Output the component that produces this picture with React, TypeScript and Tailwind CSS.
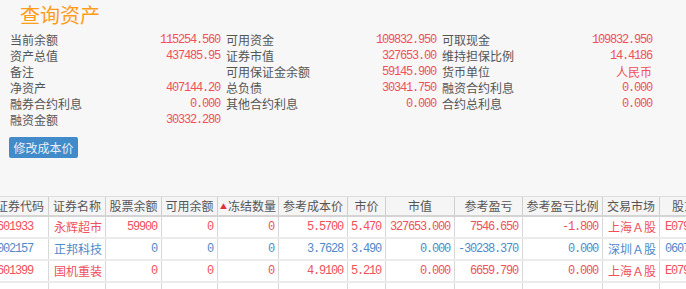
import React from "react";

// Asset query panel: summary grid + holdings table (scrolled a little to the right).

const cjk = "font-['Noto_Sans_CJK_SC',sans-serif]";
const mono = "font-['Liberation_Mono','Noto_Sans_CJK_SC',monospace] text-[12px] tracking-[-1.2px]";

type Pair = [string, string];

const summary: Pair[][] = [
  [
    ["当前余额", "115254.560"],
    ["资产总值", "437485.95"],
    ["备注", ""],
    ["净资产", "407144.20"],
    ["融券合约利息", "0.000"],
    ["融资金额", "30332.280"],
  ],
  [
    ["可用资金", "109832.950"],
    ["证券市值", "327653.00"],
    ["可用保证金余额", "59145.900"],
    ["总负债", "30341.750"],
    ["其他合约利息", "0.000"],
  ],
  [
    ["可取现金", "109832.950"],
    ["维持担保比例", "14.4186"],
    ["货币单位", "人民币"],
    ["融资合约利息", "0.000"],
    ["合约总利息", "0.000"],
  ],
];

const columns = [
  { label: "证券代码", w: 57 },
  { label: "证券名称", w: 57 },
  { label: "股票余额", w: 56 },
  { label: "可用余额", w: 56 },
  { label: "冻结数量", w: 61, sorted: true },
  { label: "参考成本价", w: 69 },
  { label: "市价", w: 38 },
  { label: "市值", w: 69 },
  { label: "参考盈亏", w: 68 },
  { label: "参考盈亏比例", w: 80 },
  { label: "交易市场", w: 57 },
  { label: "股东代码", w: 72 },
];

type Row = { up: boolean; cells: string[] };

const rows: Row[] = [
  {
    up: true,
    cells: ["601933", "永辉超市", "59900", "0", "0", "5.5700", "5.470", "327653.000", "7546.650", "-1.800", "上海Ａ股", "E079628311"],
  },
  {
    up: false,
    cells: ["002157", "正邦科技", "0", "0", "0", "3.7628", "3.490", "0.000", "-30238.370", "0.000", "深圳Ａ股", "0607138842"],
  },
  {
    up: true,
    cells: ["601399", "国机重装", "0", "0", "0", "4.9100", "5.210", "0.000", "6659.790", "0.000", "上海Ａ股", "E079628311"],
  },
];

// which columns hold text (left aligned, CJK) vs numbers (right aligned)
const textCols = new Set([1, 10]);
const leftMono = new Set([0, 11]);

function SummaryItem({ label, value }: { label: string; value: string }) {
  const isCjk = /[\u4e00-\u9fa5]/.test(value);
  return (
    <div className="flex h-[16px] items-center justify-between">
      <span className="text-[#555]">{label}</span>
      <span className={isCjk ? "text-[#f0505a]" : `${mono} text-[#f0505a]`}>{value}</span>
    </div>
  );
}

export default function App() {
  return (
    <div className={`h-[289px] w-[686px] overflow-hidden bg-[#f7f7f7] ${cjk}`}>
      <h1 className="h-[32px] pl-[20px] pt-[3px] text-[20px] leading-[24px] text-[#ff9c1a]">
        查询资产
      </h1>

      <div className="grid grid-cols-[210px_210px_210px] gap-x-[6px] pl-[10px] text-[12px] leading-[16px]">
        {summary.map((col, i) => (
          <div key={i} className="flex flex-col">
            {col.map(([l, v]) => (
              <SummaryItem key={l} label={l} value={v} />
            ))}
          </div>
        ))}
      </div>

      <div className="pl-[9px] pt-[9px]">
        <button className="flex h-[21px] w-[69px] items-center justify-center rounded-[2px] bg-[#428bca] text-[12px] text-[#e8eef5]">
          修改成本价
        </button>
      </div>

      <div className="ml-[-8px] mt-[38px] w-[746px] border-t border-[#dedede]">
        <div className="flex h-[20px] border-b-2 border-[#d4d4d4] bg-[#f5f5f5] text-[12px] text-[#555]">
          {columns.map((c, i) => (
            <div
              key={c.label}
              style={{ width: c.w }}
              className={`flex shrink-0 items-center justify-center ${i < columns.length - 1 ? "border-r border-[#cfcfcf]" : ""}`}
            >
              {c.sorted && <span className="mr-[1px] text-[7px] text-[#e0303a]">▲</span>}
              {c.label}
            </div>
          ))}
        </div>

        {[...rows, null].map((r, ri) => (
          <div key={ri} className="flex h-[22px] border-b-2 border-[#ebebeb] bg-white text-[12px]">
            {columns.map((c, i) => {
              const color = r ? (r.up ? "text-[#f0505a]" : "text-[#4f8ac9]") : "";
              const align = textCols.has(i) || leftMono.has(i) ? "justify-start pl-[5px]" : "justify-end pr-[4px]";
              const font = textCols.has(i) ? "" : mono;
              return (
                <div
                  key={c.label}
                  style={{ width: c.w }}
                  className={`flex shrink-0 items-center overflow-hidden whitespace-nowrap ${align} ${font} ${color} ${i < columns.length - 1 ? "border-r border-[#d8d8d8]" : ""}`}
                >
                  {r ? r.cells[i] : ""}
                </div>
              );
            })}
          </div>
        ))}
      </div>
    </div>
  );
}
